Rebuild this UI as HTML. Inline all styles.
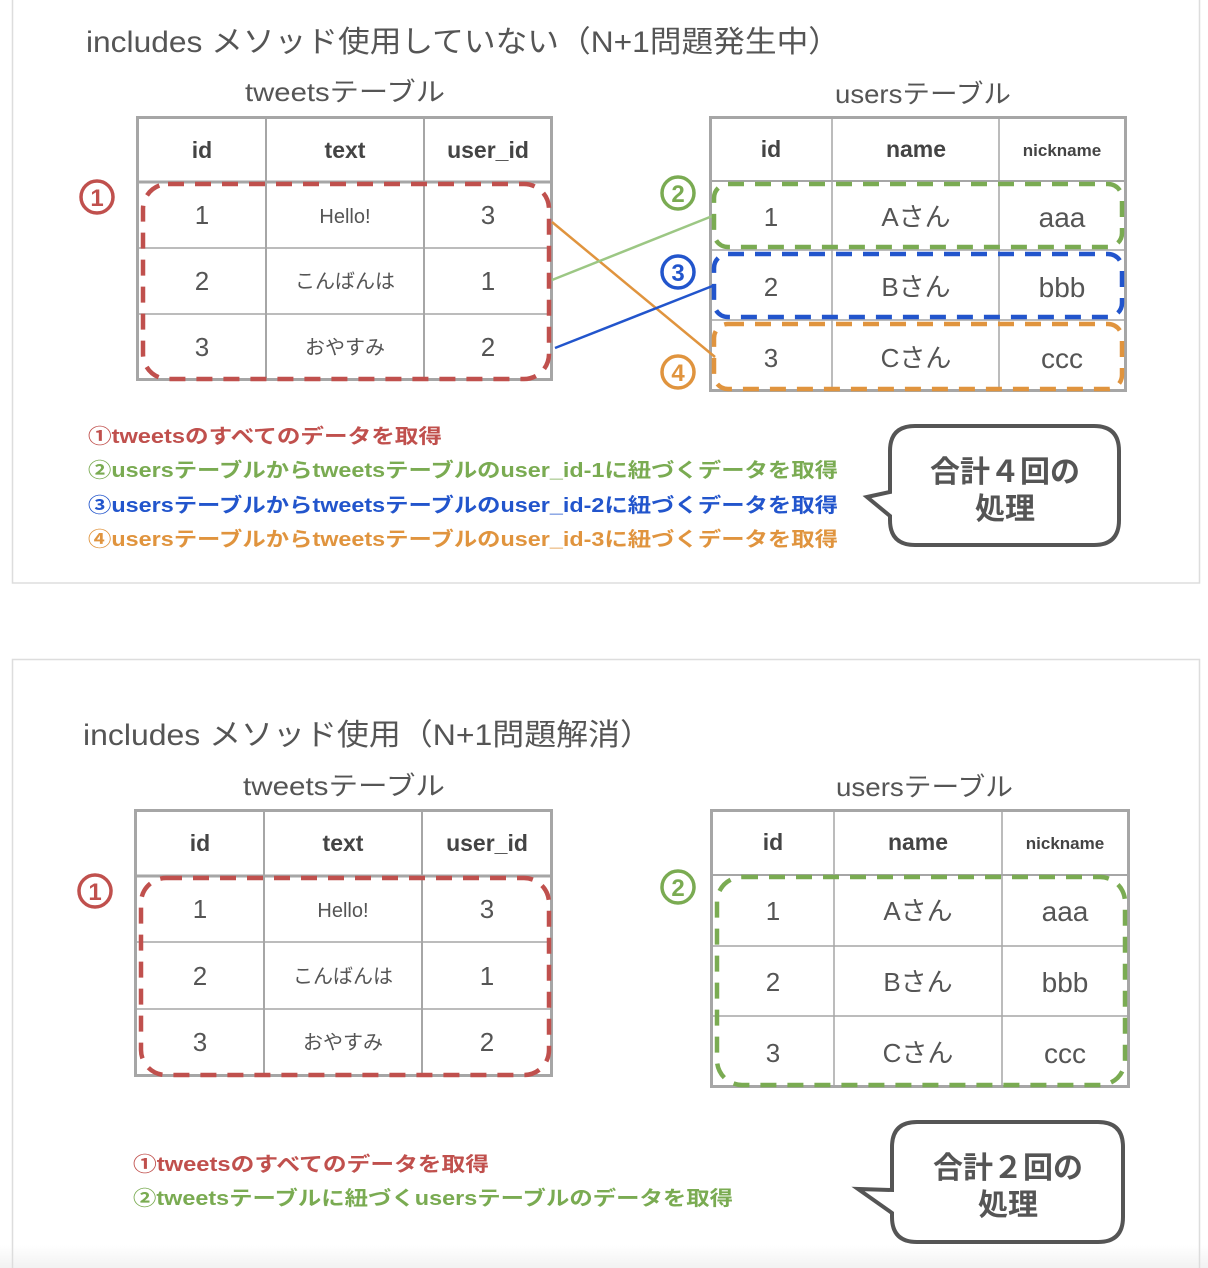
<!DOCTYPE html>
<html><head><meta charset="utf-8"><style>
html,body{margin:0;padding:0;background:#fff;}
svg{display:block;}
text{font-family:"Liberation Sans","Noto Sans CJK JP",sans-serif;}
</style></head><body>
<svg width="1208" height="1268" viewBox="0 0 1208 1268" xmlns="http://www.w3.org/2000/svg">
<defs><linearGradient id="bg" x1="0" y1="0" x2="0" y2="1"><stop offset="0" stop-color="#fff"/><stop offset="1" stop-color="#f2f2f2"/></linearGradient></defs>
<rect x="0" y="0" width="1208" height="1268" fill="#fff"/>
<rect x="0" y="1245" width="1208" height="23" fill="url(#bg)"/>
<rect x="12.5" y="-5" width="1187" height="588" fill="none" stroke="#ddd" stroke-width="1.5"/>
<rect x="12.5" y="659.5" width="1187" height="620" fill="none" stroke="#ddd" stroke-width="1.5"/>

<!-- ===== PANEL 1 ===== -->
<text x="86" y="52" font-size="30" fill="#555" textLength="754" lengthAdjust="spacingAndGlyphs">includes メソッド使用していない（N+1問題発生中）</text>
<text x="245" y="101" font-size="26" fill="#555" textLength="200" lengthAdjust="spacingAndGlyphs">tweetsテーブル</text>
<text x="835" y="103" font-size="26" fill="#555" textLength="176" lengthAdjust="spacingAndGlyphs">usersテーブル</text>

<g stroke="#a6a6a6" fill="none">
<rect x="137.5" y="117.5" width="414" height="262" stroke-width="3"/>
<line x1="266" y1="117" x2="266" y2="380" stroke-width="2"/>
<line x1="424" y1="117" x2="424" y2="380" stroke-width="2"/>
<line x1="137" y1="182" x2="552" y2="182" stroke-width="3"/>
<line x1="137" y1="248" x2="552" y2="248" stroke-width="1.5"/>
<line x1="137" y1="314" x2="552" y2="314" stroke-width="1.5"/>
<rect x="710.5" y="117.5" width="415" height="273" stroke-width="3"/>
<line x1="832" y1="117" x2="832" y2="391" stroke-width="1.5"/>
<line x1="999" y1="117" x2="999" y2="391" stroke-width="1.5"/>
<line x1="710" y1="181" x2="1126" y2="181" stroke-width="2"/>
<line x1="710" y1="250" x2="1126" y2="250" stroke-width="1.5"/>
<line x1="710" y1="320" x2="1126" y2="320" stroke-width="1.5"/>
</g>

<g font-weight="bold" fill="#444" text-anchor="middle" font-size="23">
<text x="202" y="158">id</text><text x="345" y="158">text</text><text x="488" y="158">user_id</text>
<text x="771" y="157">id</text><text x="916" y="157">name</text><text x="1062" y="156" font-size="17">nickname</text>
</g>
<g fill="#555" text-anchor="middle" font-size="26">
<text x="202" y="224">1</text><text x="345" y="223" font-size="20">Hello!</text><text x="488" y="224">3</text>
<text x="202" y="290">2</text><text x="345" y="288" font-size="20">こんばんは</text><text x="488" y="290">1</text>
<text x="202" y="356">3</text><text x="345" y="354" font-size="20">おやすみ</text><text x="488" y="356">2</text>
<text x="771" y="226">1</text><text x="916" y="226">Aさん</text><text x="1062" y="227" font-size="28">aaa</text>
<text x="771" y="296">2</text><text x="916" y="296">Bさん</text><text x="1062" y="297" font-size="28">bbb</text>
<text x="771" y="367">3</text><text x="916" y="367">Cさん</text><text x="1062" y="368" font-size="28">ccc</text>
</g>

<line x1="552" y1="222" x2="715" y2="357" stroke="#e0943e" stroke-width="2.5"/>
<line x1="552" y1="280" x2="715" y2="215" stroke="#9cc784" stroke-width="2.5"/>
<line x1="555" y1="348" x2="715" y2="285" stroke="#2255cc" stroke-width="2.5"/>

<g fill="none" stroke-width="4.5" stroke-dasharray="16 11">
<rect x="143" y="184" width="406" height="195" rx="25" stroke="#c0504d"/>
<rect x="714" y="184" width="408" height="63" rx="14" stroke="#7aab52"/>
<rect x="714" y="254" width="408" height="63" rx="14" stroke="#2255cc"/>
<rect x="714" y="324" width="408" height="65" rx="14" stroke="#e0943e"/>
</g>

<g font-size="24" font-weight="bold" text-anchor="middle" stroke-width="3.5">
<circle cx="97" cy="197" r="16" fill="none" stroke="#c0504d"/><text x="97" y="206" fill="#c0504d">1</text>
<circle cx="678" cy="193" r="16" fill="none" stroke="#7aab52"/><text x="678" y="202" fill="#7aab52">2</text>
<circle cx="678" cy="272" r="16" fill="none" stroke="#2255cc"/><text x="678" y="281" fill="#2255cc">3</text>
<circle cx="678" cy="372" r="16" fill="none" stroke="#e0943e"/><text x="678" y="381" fill="#e0943e">4</text>
</g>

<g font-size="20" font-weight="bold">
<text x="88" y="443" fill="#c0504d" textLength="354" lengthAdjust="spacingAndGlyphs">①tweetsのすべてのデータを取得</text>
<text x="88" y="477" fill="#7aab52" textLength="750" lengthAdjust="spacingAndGlyphs">②usersテーブルからtweetsテーブルのuser_id-1に紐づくデータを取得</text>
<text x="88" y="512" fill="#2255cc" textLength="750" lengthAdjust="spacingAndGlyphs">③usersテーブルからtweetsテーブルのuser_id-2に紐づくデータを取得</text>
<text x="88" y="546" fill="#e0943e" textLength="750" lengthAdjust="spacingAndGlyphs">④usersテーブルからtweetsテーブルのuser_id-3に紐づくデータを取得</text>
</g>

<path d="M915 426 H1094 Q1119 426 1119 451 V520 Q1119 545 1094 545 H915 Q890 545 890 520 V516 L867 497 L890 492 V451 Q890 426 915 426 Z" fill="#fff" stroke="#555" stroke-width="4"/>
<g font-size="30" font-weight="bold" fill="#555" text-anchor="middle">
<text x="1005" y="482">合計４回の</text>
<text x="1005" y="519">処理</text>
</g>

<!-- ===== PANEL 2 ===== -->
<text x="83" y="745" font-size="30" fill="#555" textLength="569" lengthAdjust="spacingAndGlyphs">includes メソッド使用（N+1問題解消）</text>
<text x="243" y="795" font-size="26" fill="#555" textLength="202" lengthAdjust="spacingAndGlyphs">tweetsテーブル</text>
<text x="836" y="796" font-size="26" fill="#555" textLength="177" lengthAdjust="spacingAndGlyphs">usersテーブル</text>

<g stroke="#a6a6a6" fill="none">
<rect x="135.5" y="810.5" width="416" height="265" stroke-width="3"/>
<line x1="264" y1="810" x2="264" y2="1076" stroke-width="2"/>
<line x1="422" y1="810" x2="422" y2="1076" stroke-width="2"/>
<line x1="135" y1="876" x2="552" y2="876" stroke-width="3"/>
<line x1="135" y1="942" x2="552" y2="942" stroke-width="1.5"/>
<line x1="135" y1="1009" x2="552" y2="1009" stroke-width="1.5"/>
<rect x="711.5" y="810.5" width="417" height="276" stroke-width="3"/>
<line x1="834" y1="810" x2="834" y2="1087" stroke-width="1.5"/>
<line x1="1002" y1="810" x2="1002" y2="1087" stroke-width="1.5"/>
<line x1="711" y1="875" x2="1129" y2="875" stroke-width="2"/>
<line x1="711" y1="946" x2="1129" y2="946" stroke-width="1.5"/>
<line x1="711" y1="1016" x2="1129" y2="1016" stroke-width="1.5"/>
</g>

<g font-weight="bold" fill="#444" text-anchor="middle" font-size="23">
<text x="200" y="851">id</text><text x="343" y="851">text</text><text x="487" y="851">user_id</text>
<text x="773" y="850">id</text><text x="918" y="850">name</text><text x="1065" y="849" font-size="17">nickname</text>
</g>
<g fill="#555" text-anchor="middle" font-size="26">
<text x="200" y="918">1</text><text x="343" y="917" font-size="20">Hello!</text><text x="487" y="918">3</text>
<text x="200" y="985">2</text><text x="343" y="983" font-size="20">こんばんは</text><text x="487" y="985">1</text>
<text x="200" y="1051">3</text><text x="343" y="1049" font-size="20">おやすみ</text><text x="487" y="1051">2</text>
<text x="773" y="920">1</text><text x="918" y="920">Aさん</text><text x="1065" y="921" font-size="28">aaa</text>
<text x="773" y="991">2</text><text x="918" y="991">Bさん</text><text x="1065" y="992" font-size="28">bbb</text>
<text x="773" y="1062">3</text><text x="918" y="1062">Cさん</text><text x="1065" y="1063" font-size="28">ccc</text>
</g>

<g fill="none" stroke-width="4.5" stroke-dasharray="16 11">
<rect x="141" y="878" width="408" height="197" rx="25" stroke="#c0504d"/>
<rect x="717" y="877" width="408" height="208" rx="25" stroke="#7aab52"/>
</g>

<g font-size="24" font-weight="bold" text-anchor="middle" stroke-width="3.5">
<circle cx="95" cy="891" r="16" fill="none" stroke="#c0504d"/><text x="95" y="900" fill="#c0504d">1</text>
<circle cx="678" cy="887" r="16" fill="none" stroke="#7aab52"/><text x="678" y="896" fill="#7aab52">2</text>
</g>

<g font-size="20" font-weight="bold">
<text x="133" y="1171" fill="#c0504d" textLength="356" lengthAdjust="spacingAndGlyphs">①tweetsのすべてのデータを取得</text>
<text x="133" y="1205" fill="#7aab52" textLength="600" lengthAdjust="spacingAndGlyphs">②tweetsテーブルに紐づくusersテーブルのデータを取得</text>
</g>

<path d="M917 1122 H1098 Q1123 1122 1123 1147 V1217 Q1123 1242 1098 1242 H917 Q892 1242 892 1217 V1213 L858 1189 L892 1190 V1147 Q892 1122 917 1122 Z" fill="#fff" stroke="#555" stroke-width="4"/>
<g font-size="30" font-weight="bold" fill="#555" text-anchor="middle">
<text x="1008" y="1178">合計２回の</text>
<text x="1008" y="1215">処理</text>
</g>
</svg>
</body></html>
